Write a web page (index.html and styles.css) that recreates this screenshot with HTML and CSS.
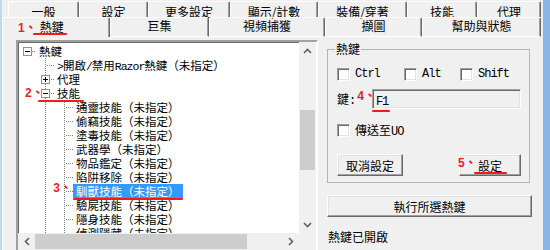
FILE: index.html
```html
<!DOCTYPE html>
<html>
<head>
    <meta charset="utf-8">
    <title>Razor 熱鍵</title>
    <link rel="stylesheet" href="styles.css">
</head>
<body>
<div class="window">
    <div class="tab-row top">
        <div class="tab">一般</div>
        <div class="tab">設定</div>
        <div class="tab">更多設定</div>
        <div class="tab">顯示/計數</div>
        <div class="tab">裝備/穿著</div>
        <div class="tab">技能</div>
        <div class="tab">代理</div>
    </div>
    <div class="tab-row front">
        <div class="tab active"><span class="note">1、</span><span class="mark m-tab">熱鍵</span></div>
        <div class="tab">巨集</div>
        <div class="tab">視頻捕獲</div>
        <div class="tab">擷圖</div>
        <div class="tab">幫助與狀態</div>
    </div>

    <div class="panel">
        <div class="tree-view">
            <div class="tree">
                <div class="row">
                    <span class="c root"><i class="box minus"></i></span>
                    <span class="label">熱鍵</span>
                </div>
                <div class="row">
                    <span class="c"></span><span class="c t"></span>
                    <span class="label"><span class="en">&gt;</span>開啟<span class="en">/</span>禁用<span class="en">Razor</span>熱鍵（未指定）</span>
                </div>
                <div class="row">
                    <span class="c"></span><span class="c t"><i class="box plus"></i></span>
                    <span class="label">代理</span>
                </div>
                <div class="row">
                    <span class="c"><span class="note n2">2、</span></span>
                    <span class="mark m-skill"><span class="c t"><i class="box minus"></i></span><span class="label">技能</span></span>
                </div>
                <div class="row"><span class="c"></span><span class="c v"></span><span class="c t deep"></span><span class="label l2">通靈技能（未指定）</span></div>
                <div class="row"><span class="c"></span><span class="c v"></span><span class="c t deep"></span><span class="label l2">偷竊技能（未指定）</span></div>
                <div class="row"><span class="c"></span><span class="c v"></span><span class="c t deep"></span><span class="label l2">塗毒技能（未指定）</span></div>
                <div class="row"><span class="c"></span><span class="c v"></span><span class="c t deep"></span><span class="label l2">武器學（未指定）</span></div>
                <div class="row"><span class="c"></span><span class="c v"></span><span class="c t deep"></span><span class="label l2">物品鑑定（未指定）</span></div>
                <div class="row"><span class="c"></span><span class="c v"></span><span class="c t deep"></span><span class="label l2">陷阱移除（未指定）</span></div>
                <div class="row"><span class="c"></span><span class="c v"></span><span class="c t deep"></span><span class="label l2 sel mark"><span class="note n3">3、</span>馴獸技能（未指定）</span></div>
                <div class="row"><span class="c"></span><span class="c v"></span><span class="c t deep"></span><span class="label l2">驗屍技能（未指定）</span></div>
                <div class="row"><span class="c"></span><span class="c v"></span><span class="c t deep"></span><span class="label l2">隱身技能（未指定）</span></div>
                <div class="row"><span class="c"></span><span class="c v"></span><span class="c t deep"></span><span class="label l2">偵測隱藏（未指定）</span></div>
            </div>
            <div class="vscroll">
                <div class="sb-btn"><svg width="9" height="6" viewBox="0 0 9 6"><path d="M1 5l3.5-3.5L8 5" fill="none" stroke="#606060" stroke-width="1.6"/></svg></div>
                <div class="track"><div class="thumb"></div></div>
                <div class="sb-btn"><svg width="9" height="6" viewBox="0 0 9 6"><path d="M1 1l3.5 3.5L8 1" fill="none" stroke="#606060" stroke-width="1.6"/></svg></div>
            </div>
            <div class="hscroll">
                <div class="sb-btn"><svg width="6" height="9" viewBox="0 0 6 9"><path d="M5 1L1.5 4.5 5 8" fill="none" stroke="#606060" stroke-width="1.6"/></svg></div>
                <div class="track"><div class="thumb"></div></div>
                <div class="sb-btn"><svg width="6" height="9" viewBox="0 0 6 9"><path d="M1 1l3.5 3.5L1 8" fill="none" stroke="#606060" stroke-width="1.6"/></svg></div>
            </div>
            <div class="corner"></div>
        </div>

        <div class="side">
            <fieldset class="group">
                <legend>熱鍵</legend>
                <div class="mods">
                    <label class="opt ctrl"><span class="check"></span><span class="en">Ctrl</span></label>
                    <label class="opt alt"><span class="check"></span><span class="en">Alt</span></label>
                    <label class="opt"><span class="check"></span><span class="en">Shift</span></label>
                </div>
                <div class="key-row">
                    <span>鍵<span class="en">:</span></span><span class="note n4">4、</span>
                    <div class="keybox"><span class="mark m-f1 en">F1</span></div>
                </div>
                <label class="opt send"><span class="check"></span><span>傳送至<span class="en">UO</span></span></label>
                <div class="btn-row">
                    <button class="btn cancel">取消設定</button>
                    <button class="btn set"><span class="note n5">5、</span><span class="mark m-set">設定</span></button>
                </div>
            </fieldset>
            <button class="btn run">執行所選熱鍵</button>
            <div class="status">熱鍵已開啟</div>
        </div>
    </div>
</div>
</body>
</html>
```

FILE: styles.css
```css
body { margin: 0; font: 12px "Noto Sans CJK TC", sans-serif; color: #000; }
.window { width: 550px; height: 250px; box-sizing: border-box; border-left: 2px solid #c3d7ee; border-right: 7px solid #86b5e6; background: #f0f0f0; overflow: hidden; }
.en { font-family: "Liberation Mono", monospace; letter-spacing: -1px; }

/* tabs */
.tab-row { display: grid; }
.tab-row.top { height: 17px; padding-left: 6px; grid-template-columns: 71px 69px 82px 88px 89px 70px 64px; }
.tab-row.front { height: 18px; grid-template-columns: 108px 99px 116px 97px 119px; }
.tab { box-sizing: border-box; border: 1px solid #fff; border-right-color: #696969; box-shadow: inset -1px 0 #a0a0a0; border-radius: 2px 2px 0 0; text-align: center; white-space: nowrap; }
.top .tab { margin-top: 1px; height: 16px; border-bottom: 0; padding-top: 3px; line-height: 13px; }
.front .tab { line-height: 16px; }
.front .tab.active { border-bottom: 0; line-height: 17px; text-align: left; padding-left: 15px; }
.active .note { margin-right: 3px; }

/* red notes */
.note { color: #f01c1c; font-weight: bold; font-size: 12px; font-family: "Liberation Sans", "Noto Sans CJK TC", sans-serif; white-space: nowrap; }
.mark { position: relative; display: inline-block; }
.mark::after { content: ""; position: absolute; left: 0; right: 0; bottom: -2px; height: 2px; background: #ee1c1c; border-radius: 1px; }
.m-tab::after { left: -7px; right: -3px; bottom: 0; }
.m-skill { display: flex; }
.m-skill::after { left: 2px; right: -2px; }
.m-f1::after { left: -4px; right: -2px; }
.m-set::after { left: -4px; right: -5px; bottom: -1px; }

/* panel */
.panel { display: flex; gap: 9px; height: 215px; box-sizing: border-box; padding: 5px 0 0 13px; border-left: 1px solid #fff; }

/* tree */
.tree-view { width: 302px; height: 212px; flex: none; box-sizing: border-box; border: 2px solid; border-color: #a0a0a0 #fff #fff #a0a0a0; box-shadow: inset 1px 1px #696969; background: #fff; display: grid; grid-template-columns: 1fr 17px; grid-template-rows: 1fr 17px; }
.tree { overflow: hidden; padding-top: 2px; font-size: 11.5px; }
.row { display: flex; height: 14px; }
.c { width: 18px; flex: none; display: flex; align-items: flex-start; }
.c.v { background: repeating-linear-gradient(#808080 0 1px, transparent 1px 2px) 9px 0 / 1px 100% no-repeat; }
.c.t { background: repeating-linear-gradient(#808080 0 1px, transparent 1px 2px) 9px 0 / 1px 100% no-repeat, repeating-linear-gradient(90deg, #808080 0 1px, transparent 1px 2px) 11px 7px / 7px 1px no-repeat; }
.c.root { background: repeating-linear-gradient(90deg, #808080 0 1px, transparent 1px 2px) 14px 7px / 4px 1px no-repeat; }
.c.deep { width: 19px; background-position: 10px 0, 12px 7px; }
.box { display: block; width: 9px; height: 9px; box-sizing: border-box; margin: 3px 0 0 5px; border: 1px solid #919191; background: #fff; }
.box.minus { background: linear-gradient(#000, #000) center / 5px 1px no-repeat, #fff; }
.box.plus { background: linear-gradient(#000, #000) center / 5px 1px no-repeat, linear-gradient(#000, #000) center / 1px 5px no-repeat, #fff; }
.label { line-height: 14px; padding: 0 2px; margin-left: 1px; white-space: nowrap; }
.label.l2 { margin-left: 0; padding: 0 3px; }
.label.sel { background: #3399ff; color: #fff; }
.n2 { padding-left: 7px; line-height: 14px; }
.n3 { position: absolute; right: 100%; top: -3px; margin-right: 1px; line-height: 14px; }

/* scrollbars */
.vscroll { display: flex; flex-direction: column; background: #f0f0f0; }
.hscroll { display: flex; background: #f0f0f0; }
.sb-btn { flex: none; width: 17px; height: 17px; display: flex; align-items: center; justify-content: center; }
.track { flex: 1; }
.vscroll .thumb { margin: 51px 1px 0; height: 60px; background: #cdcdcd; }
.hscroll .track { padding: 1px 0; }
.hscroll .thumb { width: 212px; height: 15px; background: #cdcdcd; }
.corner { background: #f0f0f0; }

/* side */
.side { width: 205px; display: flex; flex-direction: column; padding-top: 2px; }
.group { margin: 0 2px 0 0; padding: 0 8px 6px 9px; border: 1px solid #b4b4b4; min-width: 0; }
.group legend { padding: 0 1px; margin-left: -2px; line-height: 14px; }
.mods { display: flex; height: 14px; margin-top: 11px; }
.opt { display: flex; align-items: center; gap: 5px; height: 14px; }
.mods .ctrl { width: 67px; }
.mods .alt { width: 56px; }
.check { width: 13px; height: 13px; box-sizing: border-box; background: #fff; border: 1px solid; border-color: #a0a0a0 #fff #fff #a0a0a0; box-shadow: inset 1px 1px #696969, inset -1px -1px #e3e3e3; }
.key-row { display: flex; align-items: center; height: 20px; margin-top: 8px; }
.n4 { align-self: flex-start; margin: 0 -4px 0 2px; line-height: 14px; }
.keybox { flex: 1; height: 20px; box-sizing: border-box; border: 1px solid; border-color: #a0a0a0 #fff #fff #a0a0a0; box-shadow: inset 1px 1px #696969, inset -1px -1px #e3e3e3; padding: 1px 0 0 3px; }
.keybox .mark { line-height: 16px; }
.send { margin-top: 14px; }
.btn-row { display: flex; justify-content: space-between; margin-top: 17px; }
.btn { height: 22px; padding: 0; font: inherit; color: #000; background: #f0f0f0; border: 1px solid; border-color: #fff #696969 #696969 #fff; box-shadow: inset -1px -1px #a0a0a0, inset 1px 1px #e3e3e3; }
.cancel { width: 66px; }
.set { width: 62px; position: relative; }
.set .mark { line-height: 14px; }
.n5 { position: absolute; left: -2px; top: 1px; line-height: 14px; }
.run { width: 205px; margin-top: 12px; }
.status { margin-top: 13px; line-height: 14px; padding-left: 1px; }
```
